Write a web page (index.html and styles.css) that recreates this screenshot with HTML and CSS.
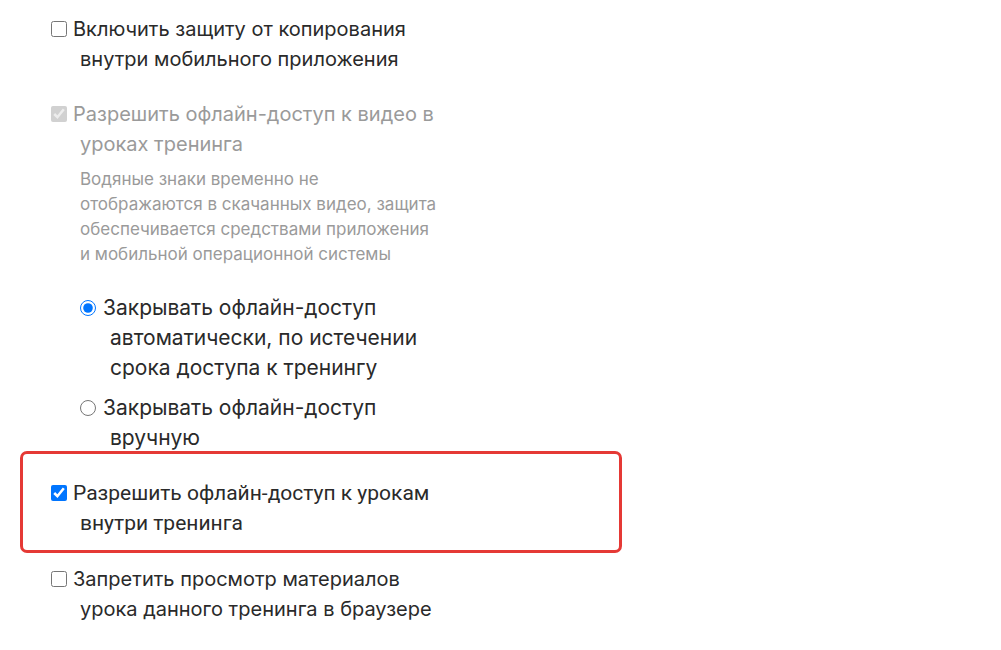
FILE: index.html
```html
<!DOCTYPE html>
<html lang="ru">
<head>
    <meta charset="UTF-8">
    <title>Настройки</title>
    <link rel="stylesheet" href="styles.css">
</head>
<body>
    <div class="settings">
        <label class="option">
            <input type="checkbox">Включить защиту от копирования<br>внутри мобильного приложения
        </label>

        <div class="option-group">
            <label class="option disabled">
                <input type="checkbox" checked disabled>Разрешить офлайн-доступ к видео в<br>уроках тренинга
            </label>
            <p class="hint">Водяные знаки временно не<br>отображаются в скачанных видео, защита<br>обеспечивается средствами приложения<br>и мобильной операционной системы</p>

            <div class="radios">
                <label class="radio">
                    <input type="radio" name="offline" checked>Закрывать офлайн-доступ<br>автоматически, по истечении<br>срока доступа к тренингу
                </label>
                <label class="radio">
                    <input type="radio" name="offline">Закрывать офлайн-доступ<br>вручную
                </label>
            </div>
        </div>

        <div class="highlight">
            <label class="option roboto">
                <input type="checkbox" checked>Разрешить офлайн-доступ к урокам<br>внутри тренинга
            </label>
        </div>

        <label class="option last">
            <input type="checkbox">Запретить просмотр материалов<br>урока данного тренинга в браузере
        </label>
    </div>
</body>
</html>
```

FILE: styles.css
```css
body {
    margin: 0;
    background-color: #fff;
    font-family: Inter, "Noto Sans", sans-serif;
    color: #2a2a2a;
}

.settings {
    padding: 14px 0 0 51px;
}

.option {
    display: block;
    font-size: 20px;
    line-height: 30px;
    padding-left: 29px;
    text-indent: -29px;
}

.option input,
.radio input {
    width: 16px;
    height: 16px;
    margin: 0 6px 0 0;
    vertical-align: -1px;
}

.option-group {
    margin-top: 25px;
}

.disabled {
    color: #9a9a9a;
}

.hint {
    margin: 8px 0 0 29px;
    font-size: 17px;
    line-height: 25px;
    color: #9a9a9a;
}

.radios {
    margin-top: 26px;
    padding-left: 29px;
    display: flex;
    flex-direction: column;
    gap: 10px;
}

.radio {
    display: block;
    font-size: 21px;
    line-height: 30px;
    padding-left: 30px;
    text-indent: -30px;
}

.radio input {
    margin-right: 7px;
}

.highlight {
    width: 540px;
    margin: -2px 0 0 -31px;
    padding: 24px 28px 12px;
    border: 3px solid #e53935;
    border-radius: 7px;
}

.roboto {
    font-family: Roboto, "Liberation Sans", sans-serif;
    font-size: 21px;
}

.last {
    margin-top: 11px;
}
```
